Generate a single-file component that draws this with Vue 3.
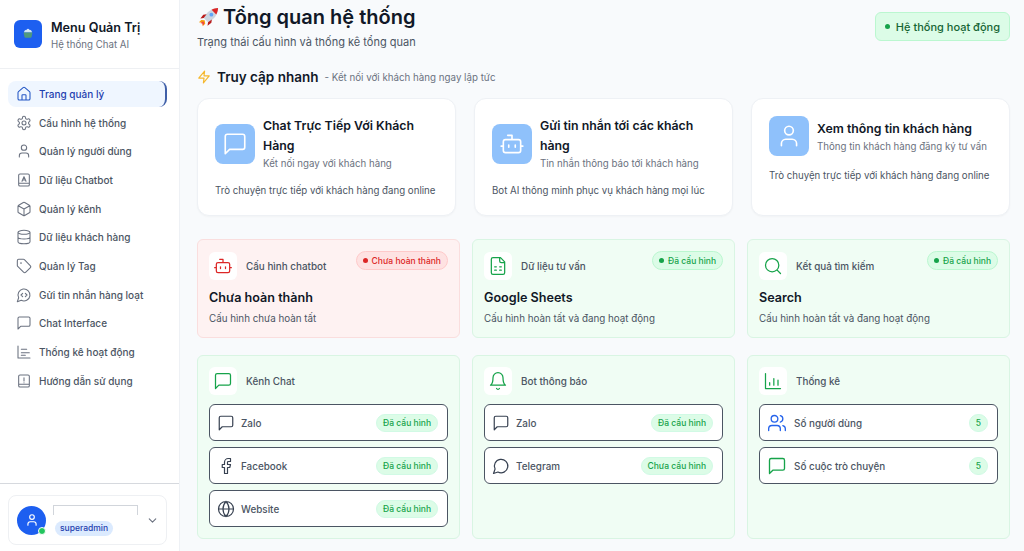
<script setup>
const circle = (x, y, r) => `M${x - r} ${y}a${r} ${r} 0 1 0 ${r * 2} 0a${r} ${r} 0 1 0 ${-r * 2} 0`

const icons = {
  home: 'M3 10a2 2 0 0 1 .7-1.5l7-6a2 2 0 0 1 2.6 0l7 6A2 2 0 0 1 21 10v9a2 2 0 0 1-2 2H5a2 2 0 0 1-2-2z M9 21v-7a1 1 0 0 1 1-1h4a1 1 0 0 1 1 1v7',
  gear: 'M12.22 2h-.44a2 2 0 0 0-2 2v.18a2 2 0 0 1-1 1.73l-.43.25a2 2 0 0 1-2 0l-.15-.08a2 2 0 0 0-2.73.73l-.22.38a2 2 0 0 0 .73 2.73l.15.1a2 2 0 0 1 1 1.72v.51a2 2 0 0 1-1 1.74l-.15.09a2 2 0 0 0-.73 2.73l.22.38a2 2 0 0 0 2.73.73l.15-.08a2 2 0 0 1 2 0l.43.25a2 2 0 0 1 1 1.73V20a2 2 0 0 0 2 2h.44a2 2 0 0 0 2-2v-.18a2 2 0 0 1 1-1.73l.43-.25a2 2 0 0 1 2 0l.15.08a2 2 0 0 0 2.73-.73l.22-.39a2 2 0 0 0-.73-2.73l-.15-.08a2 2 0 0 1-1-1.74v-.5a2 2 0 0 1 1-1.74l.15-.09a2 2 0 0 0 .73-2.73l-.22-.38a2 2 0 0 0-2.73-.73l-.15.08a2 2 0 0 1-2 0l-.43-.25a2 2 0 0 1-1-1.73V4a2 2 0 0 0-2-2z ' + circle(12, 12, 3),
  user: 'M19 21v-2a4 4 0 0 0-4-4H9a4 4 0 0 0-4 4v2 ' + circle(12, 7, 4),
  book: 'M4 5a2 2 0 0 1 2-2h12a2 2 0 0 1 2 2v14a2 2 0 0 1-2 2H6a2 2 0 0 1-2-2z M4 17h16 M9 14l3-7 3 7 M10 12h4',
  box: 'M21 8a2 2 0 0 0-1-1.73l-7-4a2 2 0 0 0-2 0l-7 4A2 2 0 0 0 3 8v8a2 2 0 0 0 1 1.73l7 4a2 2 0 0 0 2 0l7-4A2 2 0 0 0 21 16Z M3.3 7 12 12l8.7-5 M12 22V12',
  database: 'M3 5a9 3 0 1 0 18 0a9 3 0 1 0-18 0 M3 5v14a9 3 0 0 0 18 0V5 M3 12a9 3 0 0 0 18 0',
  tag: 'M12.586 2.586A2 2 0 0 0 11.172 2H4a2 2 0 0 0-2 2v7.172a2 2 0 0 0 .586 1.414l8.704 8.704a2.426 2.426 0 0 0 3.42 0l6.58-6.58a2.426 2.426 0 0 0 0-3.42z ' + circle(7.5, 7.5, 0.5),
  bulk: 'M7.9 20A9 9 0 1 0 4 16.1L2 22Z M10 9.5 7.5 12l2.5 2.5 M14 9.5l2.5 2.5-2.5 2.5',
  message: 'M21 15a2 2 0 0 1-2 2H7l-4 4V5a2 2 0 0 1 2-2h14a2 2 0 0 1 2 2z',
  activity: 'M3 3v18h18 M8 8h8 M8 13h12 M8 17h6',
  guide: 'M4 5a2 2 0 0 1 2-2h12a2 2 0 0 1 2 2v14a2 2 0 0 1-2 2H6a2 2 0 0 1-2-2z M4 17h16 M12 7v5 M12 14.5h.01',
  bot: 'M12 8V4H8 M6 8h12a2 2 0 0 1 2 2v8a2 2 0 0 1-2 2H6a2 2 0 0 1-2-2v-8a2 2 0 0 1 2-2z M2 14h2 M20 14h2 M15 13v2 M9 13v2',
  sheet: 'M15 2H6a2 2 0 0 0-2 2v16a2 2 0 0 0 2 2h12a2 2 0 0 0 2-2V7Z M14 2v4a2 2 0 0 0 2 2h4 M8 13h2 M14 13h2 M8 17h2 M14 17h2',
  search: circle(11, 11, 8) + ' m18 10-4.3-4.3',
  bell: 'M6 8a6 6 0 0 1 12 0c0 7 3 9 3 9H3s3-2 3-9 M10.3 21a1.94 1.94 0 0 0 3.4 0',
  bars: 'M3 3v18h18 M8 17v-3 M13 17V9 M18 17v-6',
  facebook: 'M18 2h-3a5 5 0 0 0-5 5v3H7v4h3v8h4v-8h3l1-4h-4V7a1 1 0 0 1 1-1h3z',
  globe: circle(12, 12, 10) + ' M12 2a14.5 14.5 0 0 0 0 20 14.5 14.5 0 0 0 0-20 M2 12h20',
  bubble: 'M7.9 20A9 9 0 1 0 4.1 16.1L2 22Z',
  users: 'M16 21v-2a4 4 0 0 0-4-4H6a4 4 0 0 0-4 4v2 ' + circle(9, 7, 4) + ' M22 21v-2a4 4 0 0 0-3-3.87 M16 3.13a4 4 0 0 1 0 7.75',
  zap: 'M13 2 3 14h9l-1 8 10-12h-9z',
  chevron: 'm6 9 6 6 6-6'
}

const menu = [
  { label: 'Trang quản lý', icon: 'home', active: true },
  { label: 'Cấu hình hệ thống', icon: 'gear' },
  { label: 'Quản lý người dùng', icon: 'user' },
  { label: 'Dữ liệu Chatbot', icon: 'book' },
  { label: 'Quản lý kênh', icon: 'box' },
  { label: 'Dữ liệu khách hàng', icon: 'database' },
  { label: 'Quản lý Tag', icon: 'tag' },
  { label: 'Gửi tin nhắn hàng loạt', icon: 'bulk' },
  { label: 'Chat Interface', icon: 'message' },
  { label: 'Thống kê hoạt động', icon: 'activity' },
  { label: 'Hướng dẫn sử dụng', icon: 'guide' }
]

const quickCards = [
  { title: 'Chat Trực Tiếp Với Khách Hàng', sub: 'Kết nối ngay với khách hàng', desc: 'Trò chuyện trực tiếp với khách hàng đang online', icon: 'message' },
  { title: 'Gửi tin nhắn tới các khách hàng', sub: 'Tin nhắn thông báo tới khách hàng', desc: 'Bot AI thông minh phục vụ khách hàng mọi lúc', icon: 'bot' },
  { title: 'Xem thông tin khách hàng', sub: 'Thông tin khách hàng đăng ký tư vấn', desc: 'Trò chuyện trực tiếp với khách hàng đang online', icon: 'user' }
]

const statusCards = [
  { label: 'Cấu hình chatbot', title: 'Chưa hoàn thành', desc: 'Cấu hình chưa hoàn tất', badge: 'Chưa hoàn thành', icon: 'bot', bad: true },
  { label: 'Dữ liệu tư vấn', title: 'Google Sheets', desc: 'Cấu hình hoàn tất và đang hoạt động', badge: 'Đã cấu hình', icon: 'sheet' },
  { label: 'Kết quả tìm kiếm', title: 'Search', desc: 'Cấu hình hoàn tất và đang hoạt động', badge: 'Đã cấu hình', icon: 'search' }
]

const detailCards = [
  {
    label: 'Kênh Chat',
    icon: 'message',
    rows: [
      { name: 'Zalo', icon: 'message', pill: 'Đã cấu hình' },
      { name: 'Facebook', icon: 'facebook', pill: 'Đã cấu hình' },
      { name: 'Website', icon: 'globe', pill: 'Đã cấu hình' }
    ]
  },
  {
    label: 'Bot thông báo',
    icon: 'bell',
    rows: [
      { name: 'Zalo', icon: 'message', pill: 'Đã cấu hình' },
      { name: 'Telegram', icon: 'bubble', pill: 'Chưa cấu hình' }
    ]
  },
  {
    label: 'Thống kê',
    icon: 'bars',
    stats: true,
    rows: [
      { name: 'Số người dùng', icon: 'users', pill: '5', tone: 'blue' },
      { name: 'Số cuộc trò chuyện', icon: 'message', pill: '5', tone: 'green' }
    ]
  }
]
</script>

<template>
  <div class="layout">
    <aside class="sidebar">
      <div class="brand">
        <div class="logo">
          <svg viewBox="0 0 12 12" width="12" height="12">
            <path d="M2 4.5a4 3 0 0 1 8 0z" fill="#cfe6f5" />
            <path d="M1.5 4.5h9l-1 4.5a1 1 0 0 1-1 .8h-5a1 1 0 0 1-1-.8z" fill="#4f9a7d" />
            <circle cx="6" cy="1.6" r="0.9" fill="#e8f3fa" />
          </svg>
        </div>
        <div class="brand-text">
          <div class="brand-name">Menu Quản Trị</div>
          <div class="brand-sub">Hệ thống Chat AI</div>
        </div>
      </div>

      <nav class="menu">
        <a v-for="item in menu" :key="item.label" class="menu-item" :class="{ active: item.active }">
          <svg class="icon menu-icon" viewBox="0 0 24 24"><path :d="icons[item.icon]" /></svg>
          <span>{{ item.label }}</span>
        </a>
      </nav>

      <div class="account">
        <div class="account-card">
          <div class="avatar">
            <svg class="icon avatar-icon" viewBox="0 0 24 24"><path :d="icons.user" /></svg>
            <span class="online"></span>
          </div>
          <div class="account-info">
            <div class="account-name"></div>
            <span class="role">superadmin</span>
          </div>
          <svg class="icon chevron" viewBox="0 0 24 24"><path :d="icons.chevron" /></svg>
        </div>
      </div>
    </aside>

    <main class="main">
      <header class="topbar">
        <div>
          <h1 class="page-title">
            <svg class="rocket" viewBox="0 0 24 24">
              <path d="M4.5 14.5 2 17l3.5.6L6 21l2.6-2.5-.6-3.6z" fill="#f59e0b" />
              <path d="M5.2 16.5 3.8 18l2 .3.3 2 1.4-1.5-.4-2.4z" fill="#ef4444" />
              <path d="M7 12.5C10 6 15 2.5 22 2c-.5 7-4 12-10.5 15z" fill="#cbd5e1" />
              <path d="M22 2c-2.600.2-4.800.8-6.800 1.900l4.900 4.900C21.200 6.800 21.800 4.600 22 2z" fill="#dc2626" />
              <path d="M7 12.500 3.500 13l3-4 3.500-.5zM11.500 17 11 20.500l4-3 .5-3.500z" fill="#b91c1c" />
              <circle cx="15" cy="9" r="2" fill="#60a5fa" />
            </svg>
            <span>Tổng quan hệ thống</span>
          </h1>
          <p class="page-sub">Trạng thái cấu hình và thống kê tổng quan</p>
        </div>
        <div class="system-badge"><i class="dot"></i>Hệ thống hoạt động</div>
      </header>

      <section class="quick-head">
        <svg class="icon zap" viewBox="0 0 24 24"><path :d="icons.zap" /></svg>
        <h2>Truy cập nhanh</h2>
        <span>- Kết nối với khách hàng ngay lập tức</span>
      </section>

      <section class="quick-grid">
        <article v-for="card in quickCards" :key="card.title" class="quick-card">
          <div class="quick-top">
            <div class="quick-icon">
              <svg class="icon" viewBox="0 0 24 24"><path :d="icons[card.icon]" /></svg>
            </div>
            <div>
              <h3>{{ card.title }}</h3>
              <p>{{ card.sub }}</p>
            </div>
          </div>
          <p class="quick-desc">{{ card.desc }}</p>
        </article>
      </section>

      <section class="status-grid">
        <article v-for="card in statusCards" :key="card.label" class="status-card" :class="{ bad: card.bad }">
          <div class="status-top">
            <div class="card-head">
              <div class="head-icon">
                <svg class="icon" viewBox="0 0 24 24"><path :d="icons[card.icon]" /></svg>
              </div>
              <span>{{ card.label }}</span>
            </div>
            <span class="status-badge"><i class="dot"></i>{{ card.badge }}</span>
          </div>
          <h3>{{ card.title }}</h3>
          <p>{{ card.desc }}</p>
        </article>
      </section>

      <section class="detail-grid">
        <article v-for="card in detailCards" :key="card.label" class="detail-card">
          <div class="card-head">
            <div class="head-icon">
              <svg class="icon" viewBox="0 0 24 24"><path :d="icons[card.icon]" /></svg>
            </div>
            <span>{{ card.label }}</span>
          </div>
          <div class="rows">
            <div v-for="row in card.rows" :key="row.name" class="row" :class="{ stats: card.stats }">
              <svg class="icon row-icon" :class="row.tone" viewBox="0 0 24 24"><path :d="icons[row.icon]" /></svg>
              <span class="row-name">{{ row.name }}</span>
              <span class="pill" :class="{ count: card.stats }">{{ row.pill }}</span>
            </div>
          </div>
        </article>
      </section>
    </main>
  </div>
</template>

<style>
html,
body {
  margin: 0;
  height: 100%;
  overflow: hidden;
}
</style>

<style scoped>
.layout {
  display: flex;
  width: 1024px;
  height: 551px;
  overflow: hidden;
  font-family: Inter, "Noto Sans", sans-serif;
  background: #f8fafc;
  color: #111827;
}

.icon {
  fill: none;
  stroke: currentColor;
  stroke-width: 2;
  stroke-linecap: round;
  stroke-linejoin: round;
  display: block;
  flex: none;
}

/* Sidebar */
.sidebar {
  width: 179px;
  flex: none;
  display: flex;
  flex-direction: column;
  background: #fff;
  border-right: 1px solid #eef1f5;
}

.brand {
  height: 69px;
  box-sizing: border-box;
  display: flex;
  align-items: center;
  gap: 9px;
  padding: 0 14px 1px;
  border-bottom: 1px solid #eef0f3;
}

.brand-text {
  padding-top: 3px;
}

.logo {
  width: 28px;
  height: 28px;
  border-radius: 6px;
  background: #1d5ff0;
  display: flex;
  align-items: center;
  justify-content: center;
}

.brand-name {
  font-size: 12.6px;
  font-weight: 600;
  line-height: 17px;
}

.brand-sub {
  font-size: 9.7px;
  line-height: 15px;
  color: #6b7280;
  margin-top: 1px;
}

.menu {
  flex: 1;
  padding: 12px 12px 0 8px;
  display: flex;
  flex-direction: column;
  gap: 3px;
}

.menu-item {
  height: 25.7px;
  display: flex;
  align-items: center;
  gap: 7px;
  padding-left: 8px;
  border-radius: 8px;
  font-size: 10px;
  font-weight: 500;
  color: #4b5563;
  white-space: nowrap;
}

.menu-item.active {
  background: #eff6ff;
  color: #1e40af;
  border-right: 2px solid #3f5fa8;
}

.menu-icon {
  width: 16px;
  height: 16px;
  stroke-width: 1.6;
  color: #6b7280;
}

.active .menu-icon {
  color: #2457c5;
}

.account {
  height: 68px;
  box-sizing: border-box;
  border-top: 1px solid #d6d9de;
  padding: 11px 12px 0 8px;
}

.account-card {
  height: 50px;
  box-sizing: border-box;
  display: flex;
  align-items: center;
  gap: 7px;
  padding: 0 8px;
  border: 1px solid #eef0f3;
  border-radius: 8px;
}

.avatar {
  position: relative;
  width: 29px;
  height: 29px;
  border-radius: 50%;
  background: #1d5ff0;
  display: flex;
  align-items: center;
  justify-content: center;
  flex: none;
}

.avatar-icon {
  width: 14px;
  height: 14px;
  color: #fff;
}

.online {
  position: absolute;
  right: 0;
  bottom: 0;
  width: 6px;
  height: 6px;
  border-radius: 50%;
  background: #22c55e;
  border: 1px solid #fff;
}

.account-info {
  width: 85px;
  flex: none;
}

.account-name {
  height: 9px;
  border: 1px solid #d1d5db;
  border-bottom: 0;
  margin-bottom: 6px;
}

.role {
  display: block;
  width: fit-content;
  margin-left: 2px;
  padding: 0 5px;
  height: 15px;
  line-height: 15px;
  border-radius: 8px;
  background: #dbeafe;
  color: #1e40af;
  font-size: 8.5px;
  font-weight: 500;
}

.chevron {
  width: 13px;
  height: 13px;
  margin-left: 1px;
  color: #6b7280;
}

/* Main */
.main {
  flex: 1;
  min-width: 0;
  padding: 0 14px 0 17px;
}

.topbar {
  display: flex;
  justify-content: space-between;
  align-items: flex-start;
  padding-top: 4px;
}

.page-title {
  display: flex;
  align-items: center;
  gap: 3px;
  margin: 0;
  font-size: 20px;
  line-height: 27px;
  font-weight: 600;
}

.rocket {
  width: 23px;
  height: 23px;
  flex: none;
}

.page-sub {
  margin: 3px 0 0;
  font-size: 11px;
  line-height: 16px;
  color: #4b5563;
}

.system-badge {
  margin-top: 8px;
  height: 29px;
  box-sizing: border-box;
  display: flex;
  align-items: center;
  gap: 6px;
  padding: 0 9px;
  border: 1px solid #bbf7d0;
  border-radius: 6px;
  background: #dcfce7;
  color: #166534;
  font-size: 11px;
  font-weight: 500;
}

.dot {
  width: 5px;
  height: 5px;
  border-radius: 50%;
  background: currentColor;
  flex: none;
}

.system-badge .dot {
  background: #16a34a;
}

.quick-head {
  display: flex;
  align-items: center;
  margin-top: 18px;
  height: 18px;
}

.quick-head h2 {
  margin: 0 6px 0 6px;
  font-size: 13.5px;
  font-weight: 600;
}

.quick-head span {
  font-size: 9.75px;
  color: #6b7280;
}

.zap {
  width: 14px;
  height: 14px;
  color: #f5b82e;
}

.quick-grid {
  display: grid;
  grid-template-columns: repeat(3, 1fr);
  gap: 18px;
  margin-top: 12px;
}

.quick-card {
  height: 118px;
  box-sizing: border-box;
  padding: 17px;
  background: #fff;
  border: 1px solid #eef1f5;
  border-radius: 12px;
  box-shadow: 0 1px 2px rgba(15, 23, 42, 0.03);
}

.quick-top {
  display: flex;
  align-items: center;
  gap: 8px;
}

.quick-icon {
  width: 40px;
  height: 40px;
  border-radius: 8px;
  background: #8fc1fb;
  display: flex;
  align-items: center;
  justify-content: center;
  flex: none;
  color: #fff;
}

.quick-icon svg {
  width: 26px;
  height: 26px;
  stroke-width: 1.5;
}

.quick-top h3 {
  margin: 0;
  font-size: 12.3px;
  line-height: 20px;
  font-weight: 600;
}

.quick-top p {
  margin: 0;
  font-size: 9.7px;
  line-height: 15px;
  color: #6b7280;
}

.quick-desc {
  margin: 12px 0 0;
  font-size: 9.7px;
  line-height: 15px;
  color: #4b5563;
}

.status-grid,
.detail-grid {
  display: grid;
  grid-template-columns: repeat(3, 1fr);
  gap: 12px;
}

.status-grid {
  margin-top: 23px;
}

.detail-grid {
  margin-top: 17px;
}

.status-card,
.detail-card {
  box-sizing: border-box;
  padding: 11px;
  background: #f0fdf4;
  border: 1px solid #d9f5e3;
  border-radius: 6px;
}

.status-card {
  height: 99px;
}

.status-card.bad {
  background: #fef2f2;
  border-color: #fadede;
}

.status-top {
  display: flex;
  justify-content: space-between;
  align-items: flex-start;
}

.status-top .card-head {
  margin-top: 1px;
}

.card-head {
  display: flex;
  align-items: center;
  gap: 9px;
  font-size: 9.9px;
  font-weight: 500;
  color: #4b5563;
}

.head-icon {
  width: 28px;
  height: 28px;
  border-radius: 6px;
  background: #fff;
  display: flex;
  align-items: center;
  justify-content: center;
  color: #16a34a;
}

.head-icon svg {
  width: 20px;
  height: 20px;
  stroke-width: 1.5;
}

.bad .head-icon {
  color: #dc2626;
}

.status-badge {
  height: 19px;
  box-sizing: border-box;
  display: flex;
  align-items: center;
  gap: 4px;
  padding: 0 6px;
  border: 1px solid #bbf7d0;
  border-radius: 10px;
  background: #dcfce7;
  color: #16a34a;
  font-size: 8.5px;
  font-weight: 500;
}

.bad .status-badge {
  background: #fee2e2;
  border-color: #fecaca;
  color: #dc2626;
}

.status-card h3 {
  margin: 9px 0 0;
  font-size: 12.6px;
  line-height: 18px;
  font-weight: 600;
}

.status-card p {
  margin: 4px 0 0;
  font-size: 9.8px;
  line-height: 15px;
  color: #4b5563;
}

.detail-card {
  height: 184px;
}

.rows {
  display: flex;
  flex-direction: column;
  gap: 6px;
  margin-top: 9px;
}

.row {
  height: 37px;
  box-sizing: border-box;
  display: flex;
  align-items: center;
  gap: 6px;
  padding: 0 9px 0 7px;
  background: #fff;
  border: 1px solid #4b5563;
  border-radius: 6px;
}

.row-icon {
  width: 18px;
  height: 18px;
  stroke-width: 1.6;
  color: #374151;
}

.row.stats {
  gap: 7px;
}

.row.stats .row-icon {
  width: 20px;
  height: 20px;
}

.row-icon.blue {
  color: #2563eb;
}

.row-icon.green {
  color: #16a34a;
}

.row-name {
  flex: 1;
  font-size: 9.9px;
  font-weight: 500;
  color: #4b5563;
}

.pill {
  height: 18px;
  box-sizing: border-box;
  line-height: 16px;
  padding: 0 6px;
  border: 1px solid #d1fae5;
  border-radius: 9px;
  background: #dcfce7;
  color: #16a34a;
  font-size: 8.5px;
  font-weight: 500;
}

.pill.count {
  width: 19px;
  padding: 0;
  text-align: center;
}
</style>
